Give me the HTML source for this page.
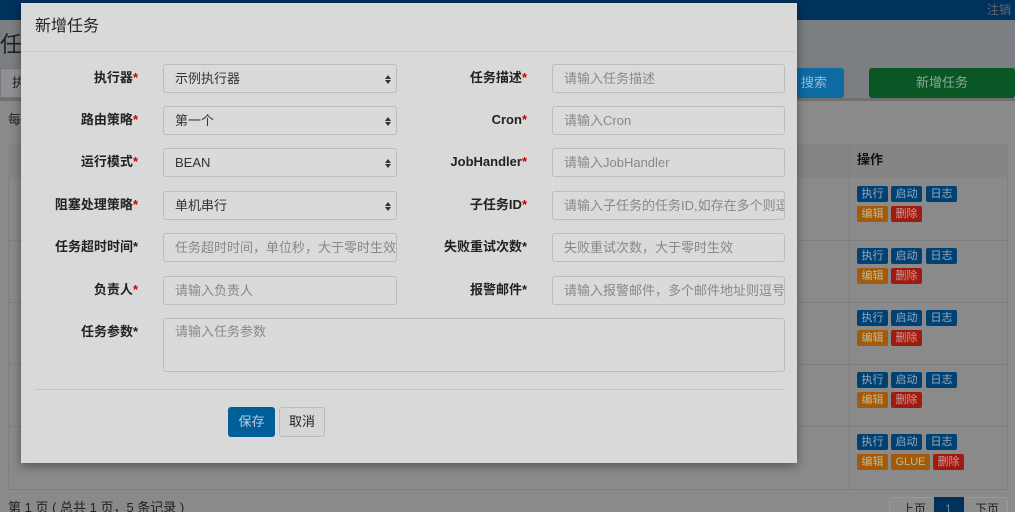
<!DOCTYPE html>
<html><head><meta charset="utf-8"><style>
*{box-sizing:border-box;margin:0;padding:0}
html{background:#8a8a8a;width:1015px;height:512px;overflow:hidden}
body{width:1015px;height:512px;overflow:hidden;background:#8a8a8a;font-family:"Liberation Sans","Noto Sans CJK SC",sans-serif;font-size:13px;line-height:16px;position:relative;color:#222}
.a{position:absolute}
.top{left:0;top:0;width:1015px;height:20px;background:#00325e}
.sub{left:0;top:20px;width:1015px;height:80px;background:#7b7e82}
.modal{left:21px;top:3px;width:776px;height:460px;background:#d9d9d9;box-shadow:0 3px 10px rgba(0,0,0,.4)}
.lbl{font-weight:bold;text-align:right;width:200px;font-size:13px;line-height:16px}
.lbl i{color:#c00;font-style:normal}
.inp{border:1px solid #bdbdbd;border-radius:3px;height:29px;background:#dadada;color:#888;padding:0 11px;line-height:27px;font-size:13px;white-space:nowrap;overflow:hidden}
.sel{color:#333}
.sel:after{content:"";position:absolute;right:5px;top:7px;border:3px solid transparent;border-bottom:4px solid #333}
.sel:before{content:"";position:absolute;right:5px;top:15px;border:3px solid transparent;border-top:4px solid #333}
.b{position:absolute;height:16px;border-radius:2px;font-size:11px;color:#9ab;text-align:center;line-height:16px;width:31px}
.bl{background:#004173}.or{background:#a45a08;color:#bb9}.rd{background:#a01a10;color:#c99}
</style></head><body>
<div class="a top"></div>
<div class="a" style="right:4px;top:2px;color:#667;font-size:12px">注销</div>
<div class="a sub"></div>
<div class="a" style="left:0;top:32px;font-size:22px;line-height:26px;color:#222">任</div>
<div class="a" style="left:0;top:68px;width:30px;height:30px;background:#8f9194;border:1px solid #777"></div>
<div class="a" style="left:12px;top:75px;color:#222">执</div>
<div class="a" style="left:784px;top:68px;width:60px;height:30px;background:#0d6aa3;border-radius:3px;color:#9bc;padding:7px 17px">搜索</div>
<div class="a" style="left:869px;top:68px;width:146px;height:30px;background:#0a5624;border-radius:3px;color:#8a9;text-align:center;line-height:30px">新增任务</div>
<div class="a" style="left:0;top:98px;width:1015px;height:3px;background:#707070"></div>
<div class="a" style="left:8px;top:112px">每</div>
<div class="a" style="left:8px;top:144px;width:1000px;height:346px;border:1px solid #7f7f7f"></div>
<div class="a" style="left:8px;top:144px;width:1000px;height:34px;background:#858585"></div>
<div class="a" style="left:857px;top:152px;font-weight:bold;color:#111">操作</div>
<div class="a" style="left:849px;top:144px;width:1px;height:346px;background:#7f7f7f"></div>
<div class="a" style="left:8px;top:240px;width:1000px;height:1px;background:#7f7f7f"></div>
<div class="a" style="left:8px;top:302px;width:1000px;height:1px;background:#7f7f7f"></div>
<div class="a" style="left:8px;top:364px;width:1000px;height:1px;background:#7f7f7f"></div>
<div class="a" style="left:8px;top:426px;width:1000px;height:1px;background:#7f7f7f"></div>
<div class="b bl" style="left:857px;top:186px">执行</div><div class="b bl" style="left:891px;top:186px">启动</div><div class="b bl" style="left:926px;top:186px">日志</div><div class="b or" style="left:857px;top:206px">编辑</div><div class="b rd" style="left:891px;top:206px">删除</div>
<div class="b bl" style="left:857px;top:248px">执行</div><div class="b bl" style="left:891px;top:248px">启动</div><div class="b bl" style="left:926px;top:248px">日志</div><div class="b or" style="left:857px;top:268px">编辑</div><div class="b rd" style="left:891px;top:268px">删除</div>
<div class="b bl" style="left:857px;top:310px">执行</div><div class="b bl" style="left:891px;top:310px">启动</div><div class="b bl" style="left:926px;top:310px">日志</div><div class="b or" style="left:857px;top:330px">编辑</div><div class="b rd" style="left:891px;top:330px">删除</div>
<div class="b bl" style="left:857px;top:372px">执行</div><div class="b bl" style="left:891px;top:372px">启动</div><div class="b bl" style="left:926px;top:372px">日志</div><div class="b or" style="left:857px;top:392px">编辑</div><div class="b rd" style="left:891px;top:392px">删除</div>
<div class="b bl" style="left:857px;top:434px">执行</div><div class="b bl" style="left:891px;top:434px">启动</div><div class="b bl" style="left:926px;top:434px">日志</div><div class="b or" style="left:857px;top:454px">编辑</div><div class="b or" style="left:891px;top:454px;width:39px">GLUE</div><div class="b rd" style="left:933px;top:454px">删除</div>
<div class="a" style="left:8px;top:500px;color:#222">第 1 页 ( 总共 1 页，5 条记录 )</div>
<div class="a" style="left:889px;top:497px;width:119px;height:20px;border:1px solid #999;border-radius:3px;background:#8d8d8d"></div>
<div class="a" style="left:934px;top:497px;width:30px;height:20px;background:#00325e"></div>
<div class="a" style="left:902px;top:501px;color:#222;font-size:12px">上页</div><div class="a" style="left:945px;top:501px;color:#789;font-size:12px">1</div><div class="a" style="left:975px;top:501px;color:#222;font-size:12px">下页</div>

<div class="a modal">
<div class="a" style="left:14px;top:14px;font-size:16px;line-height:20px;color:#222">新增任务</div>
<div class="a" style="left:0;top:48px;width:776px;height:1px;background:#ccc"></div>
<div class="a lbl" style="left:-83px;top:67px">执行器<i>*</i></div>
<div class="a inp sel" style="left:142px;top:61px;width:234px">示例执行器</div>
<div class="a lbl" style="left:306px;top:67px">任务描述<i>*</i></div>
<div class="a inp" style="left:531px;top:61px;width:233px">请输入任务描述</div>
<div class="a lbl" style="left:-83px;top:109px">路由策略<i>*</i></div>
<div class="a inp sel" style="left:142px;top:103px;width:234px">第一个</div>
<div class="a lbl" style="left:306px;top:109px">Cron<i>*</i></div>
<div class="a inp" style="left:531px;top:103px;width:233px">请输入Cron</div>
<div class="a lbl" style="left:-83px;top:151px">运行模式<i>*</i></div>
<div class="a inp sel" style="left:142px;top:145px;width:234px">BEAN</div>
<div class="a lbl" style="left:306px;top:151px">JobHandler<i>*</i></div>
<div class="a inp" style="left:531px;top:145px;width:233px">请输入JobHandler</div>
<div class="a lbl" style="left:-83px;top:194px">阻塞处理策略<i>*</i></div>
<div class="a inp sel" style="left:142px;top:188px;width:234px">单机串行</div>
<div class="a lbl" style="left:306px;top:194px">子任务ID<i>*</i></div>
<div class="a inp" style="left:531px;top:188px;width:233px">请输入子任务的任务ID,如存在多个则逗号</div>
<div class="a lbl" style="left:-83px;top:236px">任务超时时间*</div>
<div class="a inp" style="left:142px;top:230px;width:234px">任务超时时间，单位秒，大于零时生效</div>
<div class="a lbl" style="left:306px;top:236px">失败重试次数*</div>
<div class="a inp" style="left:531px;top:230px;width:233px">失败重试次数，大于零时生效</div>
<div class="a lbl" style="left:-83px;top:279px">负责人<i>*</i></div>
<div class="a inp" style="left:142px;top:273px;width:234px">请输入负责人</div>
<div class="a lbl" style="left:306px;top:279px">报警邮件*</div>
<div class="a inp" style="left:531px;top:273px;width:233px">请输入报警邮件，多个邮件地址则逗号分</div>
<div class="a lbl" style="left:-83px;top:321px">任务参数*</div>
<div class="a inp" style="left:142px;top:315px;width:622px;height:54px;line-height:16px;padding-top:5px">请输入任务参数</div>
<div class="a" style="left:13px;top:386px;width:751px;height:1px;background:#c4c4c4"></div>
<div class="a" style="left:207px;top:404px;width:47px;height:30px;background:#005f99;border-radius:3px;color:#bcd;text-align:center;line-height:30px">保存</div>
<div class="a" style="left:258px;top:404px;width:46px;height:30px;background:#d6d6d6;border:1px solid #bbb;border-radius:3px;color:#222;text-align:center;line-height:28px">取消</div>
</div>
</body></html>
